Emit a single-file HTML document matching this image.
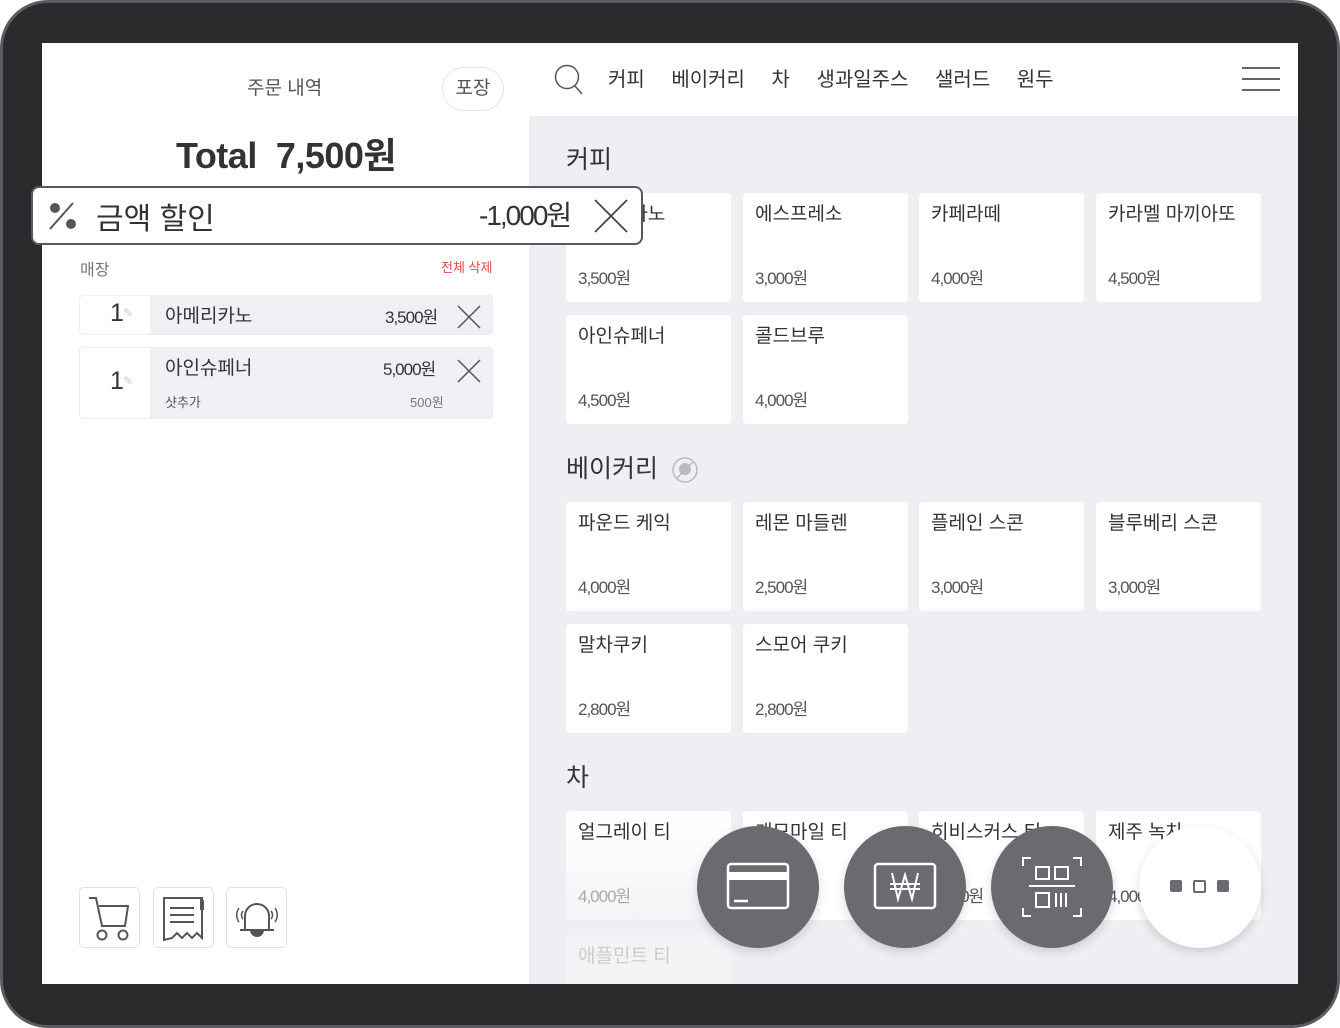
<!DOCTYPE html>
<html><head><meta charset="utf-8"><style>
*{box-sizing:border-box;margin:0;padding:0}
body{width:1340px;height:1028px;background:#fff;font-family:"Liberation Sans","Noto Sans CJK KR",sans-serif;color:#333;position:relative;overflow:hidden}
.frame{position:absolute;left:0;top:0;width:1340px;height:1028px;border-radius:48px;background:#2b2b2e;border:3px solid #5b5b61}
.screen{position:absolute;left:42px;top:43px;width:1256px;height:941px;background:#efeff3;overflow:hidden}
.left{position:absolute;left:0;top:0;width:487px;height:941px;background:#fff}
.hdr{position:absolute;left:487px;top:0;width:769px;height:73px;background:#fff}
.abs{position:absolute;white-space:nowrap}
.card{position:absolute;width:165px;height:109px;background:#fff;border-radius:4px}
.card .n{position:absolute;left:12px;top:6px;font-size:19px;color:#333}
.card .p{position:absolute;left:12px;top:71px;font-size:17px;color:#555;letter-spacing:-1px}
.sec{position:absolute;font-size:25px;color:#333}
.circ{position:absolute;width:122px;height:122px;border-radius:50%;background:#6a6a70;box-shadow:0 4px 10px rgba(0,0,0,.15)}
.ib{position:absolute;width:61px;height:61px;border:1px solid #e2e2e6;border-radius:5px;background:#fff}
</style></head><body>
<div class="frame"></div>
<div class="screen">
<div class="left"></div>
<div class="hdr"></div>
<div class="abs" style="left:205px;top:30px;font-size:19px;color:#555">주문 내역</div>
<div class="abs" style="left:400px;top:24px;width:62px;height:44px;border:1px solid #e4e4e8;border-radius:22px;font-size:19px;color:#555;text-align:center;line-height:42px">포장</div>
<div class="abs" style="left:134px;top:84px;font-size:36px;font-weight:bold;color:#333;letter-spacing:-0.5px">Total&nbsp; 7,500원</div>
<div class="abs" style="left:38px;top:213px;font-size:16px;color:#777">매장</div>
<div class="abs" style="left:399px;top:214px;font-size:13px;color:#e0494f">전체 삭제</div>
<div class="abs" style="left:37px;top:252px;width:414px;height:40px;border:1px solid #eee;border-radius:4px;background:#f0f0f4;overflow:hidden">
 <div style="position:absolute;left:0;top:0;width:70px;height:40px;background:#fff"></div>
 <div style="position:absolute;left:30px;top:3px;font-size:25px;color:#333">1</div>
 <div style="position:absolute;left:43px;top:10px;font-size:12px;color:#ccc">✎</div>
 <div style="position:absolute;left:85px;top:5px;font-size:19px">아메리카노</div>
 <div style="position:absolute;left:305px;top:7px;font-size:17px;letter-spacing:-1px">3,500원</div>
</div>
<div class="abs" style="left:37px;top:304px;width:414px;height:72px;border:1px solid #eee;border-radius:4px;background:#f0f0f4;overflow:hidden">
 <div style="position:absolute;left:0;top:0;width:70px;height:72px;background:#fff"></div>
 <div style="position:absolute;left:30px;top:19px;font-size:25px">1</div>
 <div style="position:absolute;left:43px;top:26px;font-size:12px;color:#ccc">✎</div>
 <div style="position:absolute;left:85px;top:5px;font-size:19px">아인슈페너</div>
 <div style="position:absolute;left:303px;top:7px;font-size:17px;letter-spacing:-1px">5,000원</div>
 <div style="position:absolute;left:85px;top:44px;font-size:13px;color:#555">샷추가</div>
 <div style="position:absolute;left:330px;top:44px;font-size:13px;color:#777">500원</div>
</div>
<svg class="abs" style="left:415px;top:262px" width="24" height="24"><path d="M1 1L23 23M23 1L1 23" stroke="#555" stroke-width="1.5"/></svg>
<svg class="abs" style="left:415px;top:316px" width="24" height="24"><path d="M1 1L23 23M23 1L1 23" stroke="#555" stroke-width="1.5"/></svg>

<div class="ib" style="left:37px;top:844px"><svg width="61" height="61"><path d="M9 10h7l6 28h23l3-20H19" fill="none" stroke="#555" stroke-width="2"/><circle cx="22" cy="47" r="4.5" fill="none" stroke="#555" stroke-width="2"/><circle cx="43" cy="47" r="4.5" fill="none" stroke="#555" stroke-width="2"/></svg></div>
<div class="ib" style="left:111px;top:844px"><svg width="61" height="61"><path d="M10 52V10h38v40l-5-5-5 5-5-5-5 5-5-5-5 5z" fill="none" stroke="#555" stroke-width="2"/><path d="M46 10a4 4 0 014 4v8h-4z" fill="#555"/><path d="M16 20h24M16 27h24M16 34h24" stroke="#555" stroke-width="2"/></svg></div>
<div class="ib" style="left:184px;top:844px"><svg width="61" height="61"><path d="M18 42V28a12 12 0 0124 0v14M13 42h34" fill="none" stroke="#555" stroke-width="2"/><path d="M23 42a7 7 0 0014 0z" fill="#555"/><path d="M12 20a12 12 0 000 14M48 20a12 12 0 010 14M16 23a6 6 0 000 8M44 23a6 6 0 010 8" fill="none" stroke="#555" stroke-width="1.5"/></svg></div>

<svg class="abs" style="left:512px;top:21px" width="30" height="32"><circle cx="13" cy="13" r="11.5" fill="none" stroke="#555" stroke-width="1.5"/><path d="M21 22l7 8" stroke="#555" stroke-width="1.5"/></svg>
<div class="abs" style="left:566px;top:20px;font-size:20px;color:#333;word-spacing:21px">커피 베이커리 차 생과일주스 샐러드 원두</div>
<div class="abs" style="left:1200px;top:24px;width:38px;height:2px;background:#666"></div>
<div class="abs" style="left:1200px;top:35px;width:38px;height:2px;background:#666"></div>
<div class="abs" style="left:1200px;top:46px;width:38px;height:2px;background:#666"></div>

<div class="sec" style="left:524px;top:97px">커피</div>
<div class="card" style="left:524px;top:150px"><div class="n">아메리카노</div><div class="p">3,500원</div></div>
<div class="card" style="left:701px;top:150px"><div class="n">에스프레소</div><div class="p">3,000원</div></div>
<div class="card" style="left:877px;top:150px"><div class="n">카페라떼</div><div class="p">4,000원</div></div>
<div class="card" style="left:1054px;top:150px"><div class="n">카라멜 마끼아또</div><div class="p">4,500원</div></div>
<div class="card" style="left:524px;top:272px"><div class="n">아인슈페너</div><div class="p">4,500원</div></div>
<div class="card" style="left:701px;top:272px"><div class="n">콜드브루</div><div class="p">4,000원</div></div>

<div class="sec" style="left:524px;top:406px">베이커리</div>
<svg class="abs" style="left:629px;top:413px" width="28" height="28"><circle cx="14" cy="14" r="12" fill="none" stroke="#bbb" stroke-width="1.5"/><circle cx="14" cy="13" r="6" fill="#bbb"/><path d="M5 23L23 5" stroke="#bbb" stroke-width="1.5"/></svg>
<div class="card" style="left:524px;top:459px"><div class="n">파운드 케익</div><div class="p">4,000원</div></div>
<div class="card" style="left:701px;top:459px"><div class="n">레몬 마들렌</div><div class="p">2,500원</div></div>
<div class="card" style="left:877px;top:459px"><div class="n">플레인 스콘</div><div class="p">3,000원</div></div>
<div class="card" style="left:1054px;top:459px"><div class="n">블루베리 스콘</div><div class="p">3,000원</div></div>
<div class="card" style="left:524px;top:581px"><div class="n">말차쿠키</div><div class="p">2,800원</div></div>
<div class="card" style="left:701px;top:581px"><div class="n">스모어 쿠키</div><div class="p">2,800원</div></div>

<div class="sec" style="left:524px;top:715px">차</div>
<div class="card" style="left:524px;top:768px;background:linear-gradient(#fff,#f4f4f7)"><div class="n">얼그레이 티</div><div class="p" style="color:#aaa">4,000원</div></div>
<div class="card" style="left:701px;top:768px"><div class="n">캐모마일 티</div><div class="p">4,000원</div></div>
<div class="card" style="left:877px;top:768px"><div class="n">히비스커스 티</div><div class="p">4,000원</div></div>
<div class="card" style="left:1054px;top:768px"><div class="n">제주 녹차</div><div class="p">4,000원</div></div>
<div class="card" style="left:524px;top:892px;background:#f3f3f6"><div class="n" style="color:#ccc">애플민트 티</div></div>

<div class="circ" style="left:655px;top:783px"><svg width="122" height="122"><rect x="31" y="38" width="60" height="44" rx="3" fill="none" stroke="#fff" stroke-width="2.5"/><rect x="31" y="46" width="60" height="8" fill="#fff"/><path d="M37 75h14" stroke="#fff" stroke-width="2.5"/></svg></div>
<div class="circ" style="left:802px;top:783px"><svg width="122" height="122"><rect x="31" y="38" width="60" height="44" rx="3" fill="none" stroke="#fff" stroke-width="2.5"/><path d="M48 47l6 26 7-24 7 24 6-26M46 58h30M46 63h30" fill="none" stroke="#fff" stroke-width="2"/></svg></div>
<div class="circ" style="left:949px;top:783px"><svg width="122" height="122"><path d="M32 40v-8h8M82 32h8v8M32 82v8h8M82 90h8v-8" fill="none" stroke="#fff" stroke-width="2"/><rect x="45" y="41" width="13" height="12" fill="none" stroke="#fff" stroke-width="2"/><rect x="64" y="41" width="13" height="12" fill="none" stroke="#fff" stroke-width="2"/><path d="M38 60h46" stroke="#fff" stroke-width="2"/><rect x="45" y="67" width="13" height="14" fill="none" stroke="#fff" stroke-width="2"/><path d="M65 67v14M70 67v14M75 67v14" stroke="#fff" stroke-width="2"/></svg></div>
<div class="circ" style="left:1097px;top:783px;background:#fff"><svg width="122" height="122"><rect x="31" y="54" width="12" height="12" rx="2" fill="#6a6a70"/><rect x="55" y="55" width="11" height="11" rx="1" fill="none" stroke="#6a6a70" stroke-width="2"/><rect x="78" y="54" width="12" height="12" rx="2" fill="#6a6a70"/></svg></div>
</div>

<div class="abs" style="left:31px;top:186px;width:612px;height:59px;background:#fff;border:2px solid #58585e;border-radius:8px">
 <svg style="position:absolute;left:14px;top:12px" width="32" height="32"><circle cx="8" cy="8" r="5" fill="#555"/><circle cx="24" cy="24" r="5" fill="#555"/><path d="M3 29L26 3" stroke="#555" stroke-width="2"/></svg>
 <div style="position:absolute;left:63px;top:6px;font-size:30px;color:#333">금액 할인</div>
 <div style="position:absolute;left:446px;top:6px;font-size:28px;color:#333;letter-spacing:-2px">-1,000원</div>
 <svg style="position:absolute;left:560px;top:10px" width="36" height="36"><path d="M2 2L34 34M34 2L2 34" stroke="#444" stroke-width="1.8"/></svg>
</div>
</body></html>
